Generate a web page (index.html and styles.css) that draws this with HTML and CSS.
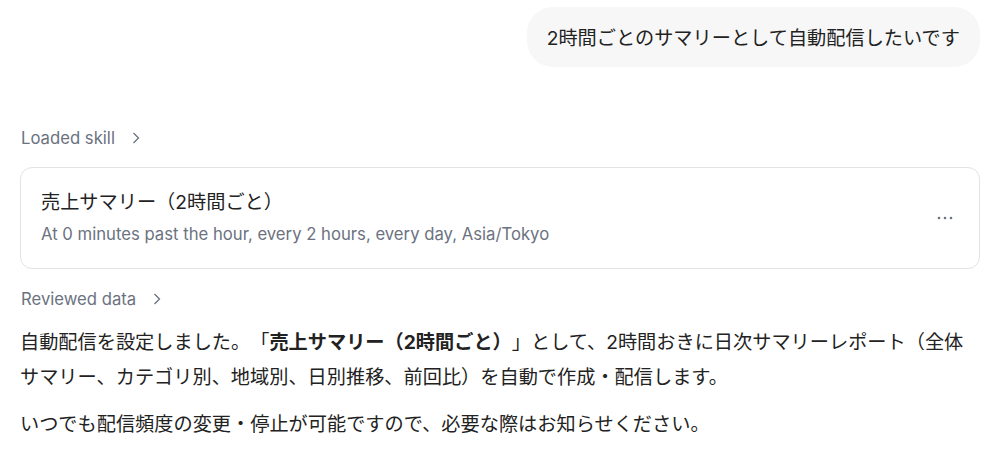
FILE: index.html
```html
<!DOCTYPE html>
<html lang="ja">
  <head>
    <meta charset="UTF-8" />
    <meta name="viewport" content="width=device-width, initial-scale=1.0" />
    <title>Chat</title>
    <link rel="stylesheet" href="styles.css">
  </head>
  <body>
    <main class="chat">
      <!-- user message -->
      <div class="user-row">
        <div class="bubble">2時間ごとのサマリーとして自動配信したいです</div>
      </div>

      <!-- assistant turn -->
      <section class="reply">
        <button class="step">Loaded skill
          <svg class="chev" width="8" height="12" viewBox="0 0 8 12"><path d="M1.5 1l5 5-5 5"/></svg>
        </button>

        <div class="card">
          <div class="card-body">
            <div class="card-title">売上サマリー（2時間ごと）</div>
            <div class="card-sub">At 0 minutes past the hour, every 2 hours, every day, Asia/Tokyo</div>
          </div>
          <button class="more" aria-label="More">
            <svg width="16" height="4" viewBox="0 0 16 4"><circle cx="2" cy="2" r="1.3"/><circle cx="8" cy="2" r="1.3"/><circle cx="14" cy="2" r="1.3"/></svg>
          </button>
        </div>

        <button class="step">Reviewed data
          <svg class="chev" width="8" height="12" viewBox="0 0 8 12"><path d="M1.5 1l5 5-5 5"/></svg>
        </button>

        <p class="msg">自動配信を設定しました。「<b>売上サマリー（2時間ごと）</b>」として、2時間おきに日次サマリーレポート（全体サマリー、カテゴリ別、地域別、日別推移、前回比）を自動で作成・配信します。</p>
        <p class="msg">いつでも配信頻度の変更・停止が可能ですので、必要な際はお知らせください。</p>
      </section>
    </main>
  </body>
</html>
```
FILE: styles.css
```css
:root{--text:#222;--muted:#6b7280;--line:#e3e3e3;--bubble:#f7f7f8}
*{box-sizing:border-box;margin:0;padding:0}
body{font-family:Inter,"Noto Sans CJK JP",sans-serif;color:var(--text);background:#fff;text-spacing-trim:space-all}
.chat{padding:7px 23px 0 20px}
.user-row{display:flex;justify-content:flex-end}
.bubble{background:var(--bubble);border-radius:26px;padding:0 20px;height:60px;display:flex;align-items:center;font-size:19.2px}
.reply{margin-top:61px;display:flex;flex-direction:column;align-items:flex-start}
.step{background:none;border:none;font-family:inherit;color:var(--muted);font-size:16.7px;display:flex;align-items:center;gap:17px;height:20px;padding-left:1px;cursor:pointer}
.chev{fill:none;stroke:var(--muted);stroke-width:1.3}
.card{align-self:stretch;display:flex;align-items:center;justify-content:space-between;border:1px solid var(--line);border-radius:12px;padding:0 26px 0 20px;height:102px;margin:19px 0 20px}
.card-title{font-size:19.2px;line-height:26px;margin-top:-3px}
.card-sub{font-size:16.7px;color:var(--muted);margin-top:9px}
.more{background:none;border:none;fill:#6b7280;display:flex;cursor:pointer}
.msg{font-size:19.2px;line-height:35px}
.step+.msg{margin-top:16px}
.msg+.msg{margin-top:12px}
b{font-weight:700}
```
